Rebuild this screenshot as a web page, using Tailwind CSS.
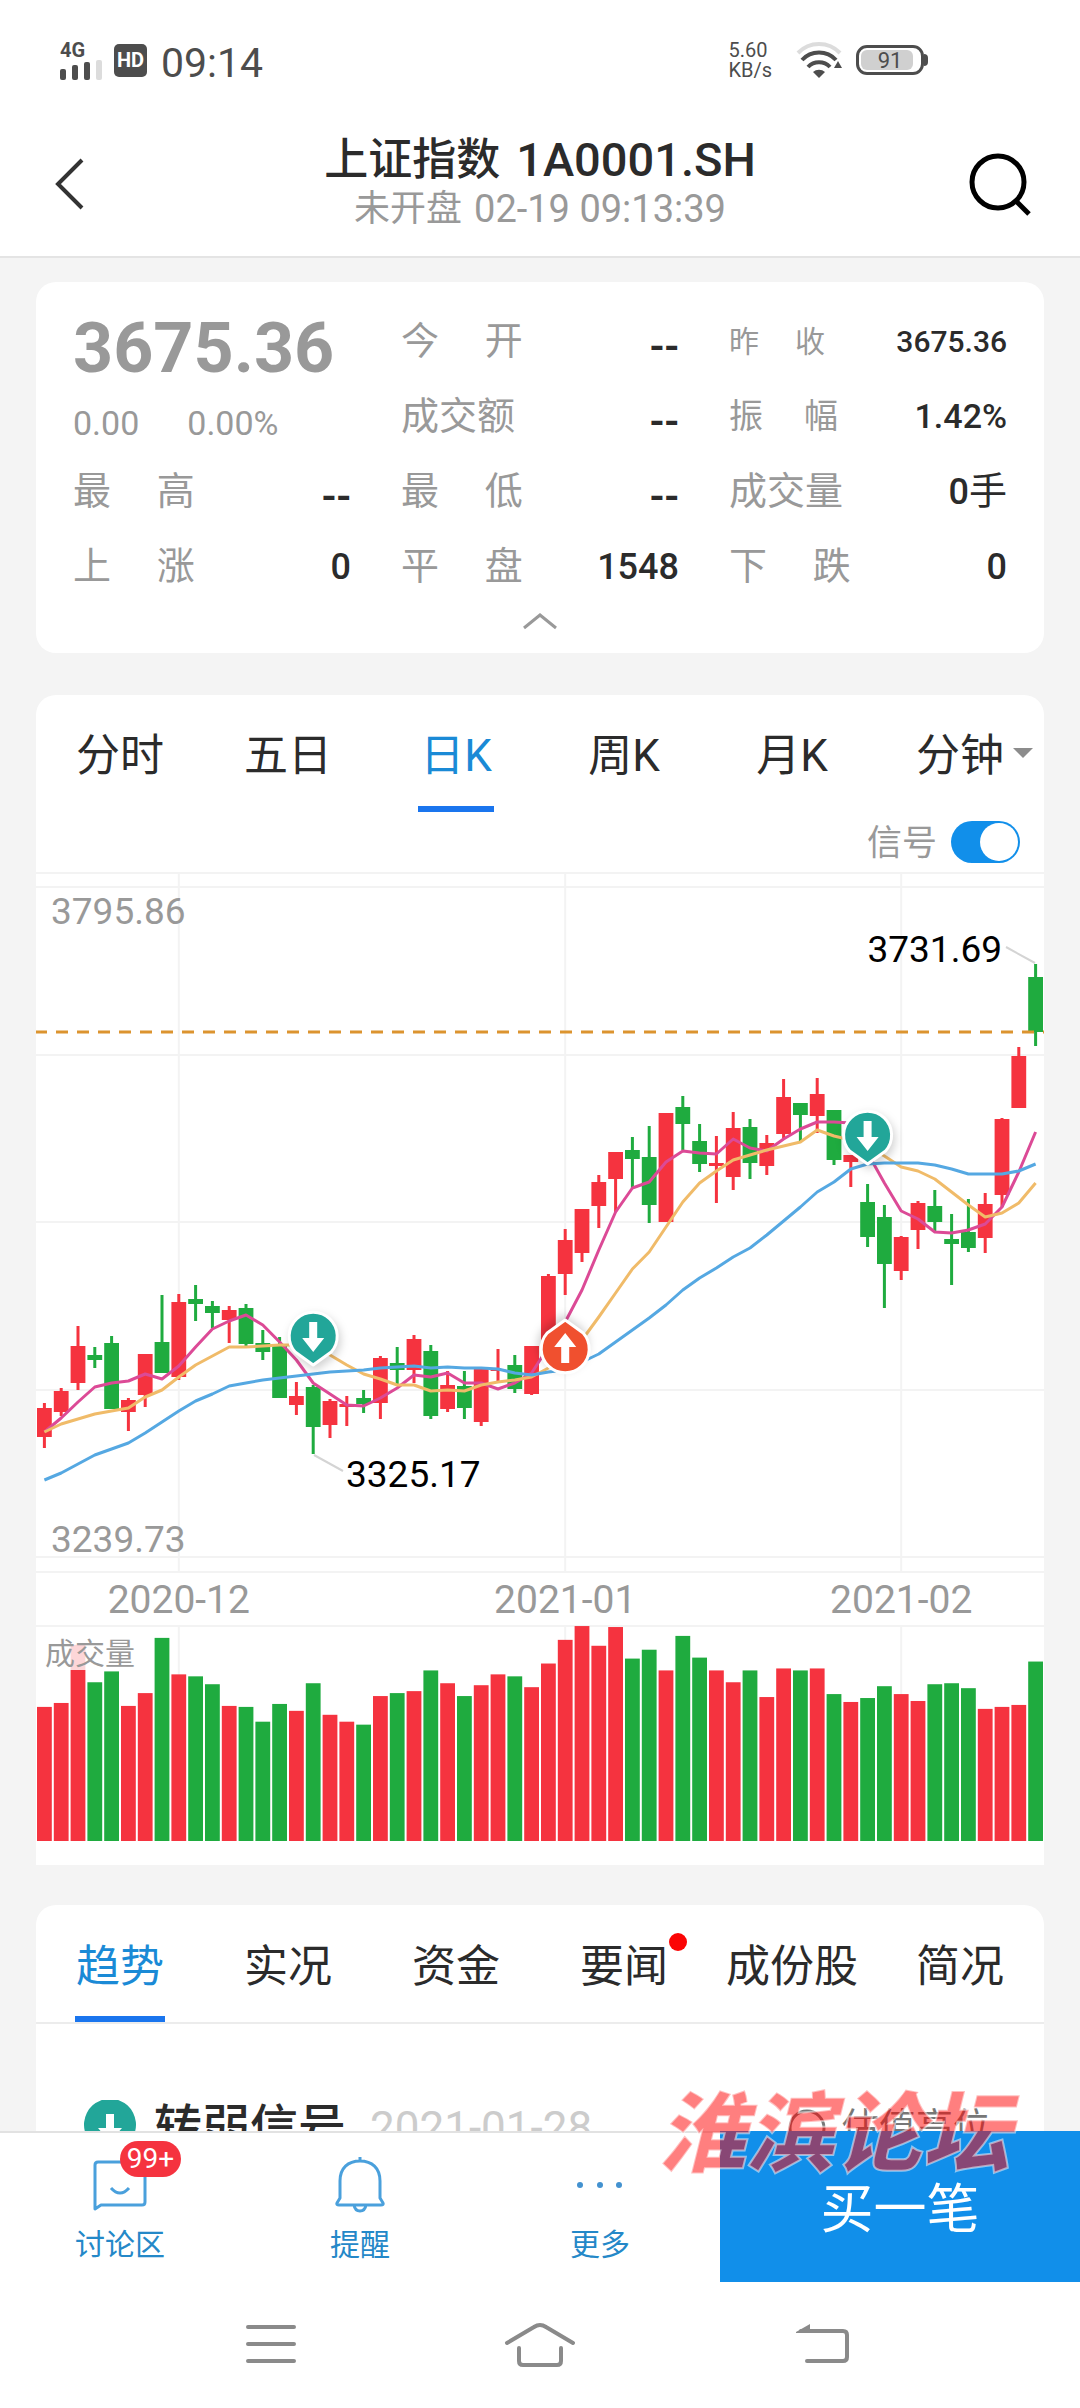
<!DOCTYPE html>
<html lang="zh-CN">
<head>
<meta charset="utf-8">
<meta name="viewport" content="width=device-width, initial-scale=1">
<title>上证指数 1A0001.SH</title>
<script src="https://cdn.jsdelivr.net/npm/@tailwindcss/browser@4"></script>
</head>
<body class="flex h-screen flex-col overflow-hidden bg-[#f4f4f4] font-[Roboto,'Noto_Sans_CJK_SC',sans-serif] text-[#2b2b2b]">

<!-- Status bar -->
<div class="flex h-[120px] shrink-0 items-center bg-white pl-[60px] pr-[152px] text-[#4d4d4d]">
  <div class="flex w-[44px] flex-col">
    <span class="text-[20px] leading-5 font-bold">4G</span>
    <svg class="h-[20px] w-[44px]" viewBox="0 0 44 20" aria-hidden="true">
      <g fill="#4d4d4d"><rect x="0" y="9" width="6" height="11" rx="2"/><rect x="12" y="5" width="6" height="15" rx="2"/><rect x="24" y="2" width="6" height="18" rx="2"/></g>
      <rect x="36" y="0" width="6" height="20" rx="2" fill="#dcdcdc"/>
    </svg>
  </div>
  <span class="ml-2.5 flex h-[33px] w-[33px] items-center justify-center rounded-[5px] bg-[#4d4d4d] text-[20px] font-bold text-white">HD</span>
  <span class="ml-3.5 pt-1.5 text-[41px] leading-[48px]">09:14</span>
  <div class="ml-auto flex flex-col text-[20px] leading-5">
    <span>5.60</span><span>KB/s</span>
  </div>
  <svg class="ml-6 h-[36px] w-[46px]" viewBox="0 0 46 36" fill="none" stroke-width="4" aria-hidden="true">
    <path d="M2 11a29 29 0 0 1 42 0" stroke="#dcdcdc"/>
    <path d="M6 18a23 23 0 0 1 34 0" stroke="#4d4d4d"/>
    <path d="M12 25a15 15 0 0 1 22 0" stroke="#4d4d4d"/>
    <path d="M17 30a9 9 0 0 1 12 0l-6 6z" fill="#4d4d4d"/>
    <path d="M38 26l4-7 4 7z" fill="#4d4d4d"/>
  </svg>
  <div class="ml-3.5 flex items-center">
    <span class="flex h-[30px] w-[68px] items-center rounded-[11px] border-[3px] border-[#4d4d4d] p-[2px]">
      <span class="flex h-full w-[52px] items-center justify-center rounded-[6px] bg-[#d0d0d0] pl-1.5 text-[22px]">91</span>
    </span>
    <span class="h-3 w-1 rounded-r bg-[#4d4d4d]"></span>
  </div>
</div>

<!-- Title bar -->
<header class="flex h-[138px] shrink-0 items-center border-b-2 border-[#e4e4e4] bg-white px-[49px] pb-2">
  <button type="button" aria-label="返回" class="flex h-16 w-16 items-center">
    <svg class="h-[54px] w-[36px]" viewBox="0 0 36 54" fill="none" stroke="#333" stroke-width="4"><path d="M33 3L9 27l24 24"/></svg>
  </button>
  <div class="flex flex-1 flex-col items-center">
    <h1 class="flex items-center gap-4 text-[44px] leading-[50px] font-medium"><span>上证指数</span><span class="text-[47px]">1A0001.SH</span></h1>
    <p class="flex items-center gap-3 text-[36px] leading-[48px] text-[#999]"><span>未开盘</span><span class="text-[38px]">02-19 09:13:39</span></p>
  </div>
  <button type="button" aria-label="搜索" class="flex h-16 w-16 items-center justify-end">
    <svg class="h-[64px] w-[64px]" viewBox="0 0 64 64" fill="none" stroke="#000" stroke-width="5"><circle cx="31" cy="30" r="26"/><path d="M49 49l13 13"/></svg>
  </button>
</header>

<main class="flex min-h-0 flex-1 flex-col overflow-hidden px-9">

  <!-- Quote summary -->
  <section class="mt-6 shrink-0 rounded-[20px] bg-white px-[37px] pt-[22px]">
    <div class="grid grid-cols-3 grid-rows-[repeat(4,75px)] gap-x-[50px] text-[36px]">
      <div class="row-span-2 flex flex-col text-[#999]">
        <strong class="text-[70px] leading-[88px] font-bold">3675.36</strong>
        <p class="flex gap-12 text-[34px] leading-[62px]"><span>0.00</span><span>0.00%</span></p>
      </div>
      <div class="flex items-center justify-between"><span class="text-[38px] text-[#999]">今　&thinsp;开</span><b class="font-['Noto_Sans_CJK_SC',sans-serif] text-[40px] font-bold">--</b></div>
      <div class="flex items-center justify-between"><span class="text-[30px] text-[#999]">昨　&thinsp;收</span><b class="text-[30px] font-medium">3675.36</b></div>
      <div class="flex items-center justify-between"><span class="text-[38px] text-[#999]">成交额</span><b class="font-['Noto_Sans_CJK_SC',sans-serif] text-[40px] font-bold">--</b></div>
      <div class="flex items-center justify-between"><span class="text-[34px] text-[#999]">振　&thinsp;幅</span><b class="text-[34px] font-medium">1.42%</b></div>
      <div class="flex items-center justify-between"><span class="text-[38px] text-[#999]">最　&thinsp;高</span><b class="font-['Noto_Sans_CJK_SC',sans-serif] text-[40px] font-bold">--</b></div>
      <div class="flex items-center justify-between"><span class="text-[38px] text-[#999]">最　&thinsp;低</span><b class="font-['Noto_Sans_CJK_SC',sans-serif] text-[40px] font-bold">--</b></div>
      <div class="flex items-center justify-between"><span class="text-[38px] text-[#999]">成交量</span><b class="font-medium">0<span class="text-[38px] font-normal">手</span></b></div>
      <div class="flex items-center justify-between"><span class="text-[38px] text-[#999]">上　&thinsp;涨</span><b class="font-medium">0</b></div>
      <div class="flex items-center justify-between"><span class="text-[38px] text-[#999]">平　&thinsp;盘</span><b class="font-medium">1548</b></div>
      <div class="flex items-center justify-between"><span class="text-[38px] text-[#999]">下　&thinsp;跌</span><b class="font-medium">0</b></div>
    </div>
    <button type="button" aria-label="收起" class="flex h-[49px] w-full justify-center pt-2">
      <svg class="h-[18px] w-[36px]" viewBox="0 0 36 18" fill="none" stroke="#999" stroke-width="3"><path d="M2 16L18 3l16 13"/></svg>
    </button>
  </section>

  <!-- K-line chart -->
  <section class="mt-[42px] shrink-0 rounded-t-[20px] bg-white">
    <nav class="grid h-[117px] grid-cols-6 text-[44px]">
      <button type="button" class="flex flex-col items-center"><span class="flex h-[111px] items-center pt-2.5">分时</span></button>
      <button type="button" class="flex flex-col items-center"><span class="flex h-[111px] items-center pt-2.5">五日</span></button>
      <button type="button" class="flex flex-col items-center text-[#1a8ad6]"><span class="flex h-[111px] items-center pt-2.5">日K</span><span class="h-1.5 w-[76px] bg-[#1a75ee]"></span></button>
      <button type="button" class="flex flex-col items-center"><span class="flex h-[111px] items-center pt-2.5">周K</span></button>
      <button type="button" class="flex flex-col items-center"><span class="flex h-[111px] items-center pt-2.5">月K</span></button>
      <button type="button" class="relative flex flex-col items-center"><span class="flex h-[111px] items-center pt-2.5">分钟</span>
        <svg class="absolute right-[11px] top-[53px] h-[10px] w-[20px]" viewBox="0 0 20 10" fill="#8c8c8c"><path d="M0 0h20L10 10z"/></svg>
      </button>
    </nav>
    <div class="flex h-[60px] items-center justify-end gap-3.5 pr-6">
      <label for="signal" class="pt-1 text-[35px] text-[#999]">信号</label>
      <span class="relative flex">
        <input id="signal" type="checkbox" role="switch" checked class="h-[42px] w-[69px] appearance-none rounded-full bg-[#ccc] checked:bg-[#118fea]">
        <span class="pointer-events-none absolute right-0.5 top-0.5 h-[38px] w-[38px] rounded-full bg-white"></span>
      </span>
    </div>
    <svg id="chart" class="block h-auto w-full font-[Roboto,'Noto_Sans_CJK_SC',sans-serif]" viewBox="0 0 1008 993" role="img" aria-label="日K线图"></svg>
  </section>

  <!-- Detail tabs -->
  <section class="mt-10 shrink-0 rounded-t-[20px] bg-white">
    <nav class="grid h-[119px] grid-cols-6 border-b-2 border-[#ececec] text-[44px] whitespace-nowrap">
      <button type="button" class="flex flex-col items-center text-[#1a8ad6]"><span class="flex h-[111px] items-center pt-3">趋势</span><span class="h-1.5 w-[90px] bg-[#1a75ee]"></span></button>
      <button type="button" class="flex flex-col items-center"><span class="flex h-[111px] items-center pt-3">实况</span></button>
      <button type="button" class="flex flex-col items-center"><span class="flex h-[111px] items-center pt-3">资金</span></button>
      <button type="button" class="relative flex flex-col items-center"><span class="flex h-[111px] items-center pt-3">要闻</span><span class="absolute right-[21px] top-7 h-[18px] w-[18px] rounded-full bg-[#fb0505]"></span></button>
      <button type="button" class="flex flex-col items-center"><span class="flex h-[111px] items-center pt-3">成份股</span></button>
      <button type="button" class="flex flex-col items-center"><span class="flex h-[111px] items-center pt-3">简况</span></button>
    </nav>
    <div class="flex items-center pt-[66px] pr-[54px] pl-12">
      <svg class="h-[56px] w-[52px]" viewBox="0 0 52 56"><path d="M26 56L5 40A26 26 0 1 1 47 40z" fill="#22a699"/><path d="M22 14h8v14h8L26 42 14 28h8z" fill="#fff"/></svg>
      <h2 class="ml-[18px] text-[48px] leading-[76px] font-medium">转弱信号</h2>
      <time class="ml-6 text-[44px] text-[#ccc]" datetime="2021-01-28">2021-01-28</time>
      <a href="#" class="ml-auto flex items-center gap-4 text-[37px] text-[#777]">
        <svg class="h-[38px] w-[38px]" viewBox="0 0 38 38" fill="none" stroke="#777" stroke-width="3"><circle cx="19" cy="19" r="17"/></svg>估值高位
      </a>
    </div>
  </section>
</main>

<!-- Action bar -->
<footer class="relative shrink-0 bg-white">
  <div class="grid h-[151px] grid-cols-[2fr_2fr_2fr_3fr] text-[30px] text-[#2488c8]">
    <button type="button" class="relative flex flex-col items-center border-t-2 border-[#e2e2e2] pt-6">
      <svg class="h-[56px] w-[56px]" viewBox="0 0 56 56" fill="none" stroke="#4aa0dc" stroke-width="3" stroke-linejoin="round"><path d="M3 52V8q0-3 3-3h44q3 0 3 3v37q0 3-3 3H9zM19 31q9 10 18 0"/></svg>
      <span class="mt-2 leading-[48px]">讨论区</span>
      <span class="absolute left-1/2 top-2 flex h-9 w-[61px] items-center justify-center rounded-full bg-[#f5333f] text-[28px] text-white">99+</span>
    </button>
    <button type="button" class="flex flex-col items-center border-t-2 border-[#e2e2e2] pt-6">
      <svg class="h-[56px] w-[56px]" viewBox="0 0 56 56" fill="none" stroke="#4aa0dc" stroke-width="3" stroke-linejoin="round"><path d="M28 0v4M8 41V24C8 11 16 4 28 4s20 7 20 20v17l3 5q1 2-2 2H7q-3 0-2-2zM22 48q1 6 6 6t6-6"/></svg>
      <span class="mt-2 leading-[48px]">提醒</span>
    </button>
    <button type="button" class="flex flex-col items-center border-t-2 border-[#e2e2e2] pt-6">
      <svg class="h-[56px] w-[56px]" viewBox="0 0 56 56" fill="#4392d0"><circle cx="8" cy="28" r="3"/><circle cx="28" cy="28" r="3"/><circle cx="47" cy="28" r="3"/></svg>
      <span class="mt-2 leading-[48px]">更多</span>
    </button>
    <button type="button" class="bg-[#118fea] pt-2 text-[53px] text-white">买一笔</button>
  </div>
  <div class="pointer-events-none absolute right-[70px] -top-[52px] flex font-['Noto_Sans_CJK_SC',sans-serif] text-[88px] leading-[96px] font-black text-[#ff0000]/50 italic [-webkit-text-stroke:2px_rgb(255_255_255_/_0.5)]">淮滨论坛</div>
  <div class="grid h-[126px] grid-cols-[1fr_270px_1fr] items-center">
    <button type="button" aria-label="最近任务" class="flex justify-end pr-[108px]"><svg class="h-[44px] w-[52px]" viewBox="0 0 52 44" stroke="#8a8a8a" stroke-width="4" stroke-linecap="round"><path d="M3 4h46M3 21h46M3 38h46"/></svg></button>
    <button type="button" aria-label="主页" class="flex justify-center"><svg class="h-[46px] w-[72px]" viewBox="0 0 72 46" fill="none" stroke="#8a8a8a" stroke-width="4" stroke-linecap="round"><path d="M3 21L30 5q6-4 12 0l27 16M15 26v13q0 4 4 4h34q4 0 4-4V26"/></svg></button>
    <button type="button" aria-label="后退" class="flex pl-[120px]"><svg class="h-[44px] w-[56px]" viewBox="0 0 56 44" fill="none" stroke="#8a8a8a" stroke-width="4" stroke-linecap="round"><path d="M6 8h42q4 0 4 4v22q0 4-4 4H12"/><path d="M1 9L15 1v9H1z" fill="#8a8a8a" stroke="none"/></svg></button>
  </div>
</footer>

<script>
  const UP = '#f5333f', DOWN = '#1fab3f';
  const step = 16.8, first = 8.4, cx = i => first + step * i;
  const base = 969, volScale = 0.986;

  // [rising, high, body top, body bottom, low, volume]
  const days = [
    [1,531,536,565,576,136],[1,516,519,540,544,140],[1,454,474,511,518,199],[0,475,483,488,496,161],[0,464,471,537,537,172],
    [1,526,528,540,559,137],[1,482,482,523,535,150],[0,423,470,501,501,206],[1,422,430,505,508,169],[0,413,427,432,449,167],
    [0,429,434,441,456,159],[1,434,438,448,471,137],[0,432,436,472,474,136],[0,458,471,480,488,121],[0,465,474,526,526,139],
    [1,510,524,533,543,132],[0,513,515,555,582,160],[1,527,529,553,566,128],[1,524,532,535,554,121],[0,518,526,532,541,118],
    [1,484,486,531,547,147],[0,475,491,498,512,150],[1,463,467,498,511,152],[0,473,479,544,547,173],[1,499,513,537,540,160],
    [0,499,514,536,547,147],[1,497,497,550,554,158],[1,477,497,499,509,169],[0,483,493,517,521,167],[1,474,474,522,523,156],
    [1,402,404,475,475,180],[1,357,368,402,423,204],[1,337,337,381,390,218],[1,303,310,334,356,198],[1,280,280,307,340,217],
    [0,265,278,287,316,185],[0,254,285,333,351,194],[1,241,241,350,350,173],[0,224,235,252,278,208],[0,252,269,292,300,186],
    [1,264,291,294,331,173],[1,240,256,305,318,161],[0,247,255,291,307,173],[1,263,271,294,303,146],[1,207,225,262,266,175],
    [0,231,231,243,270,173],[1,206,222,244,261,175],[0,238,238,288,293,149],[1,283,283,290,315,141],[0,312,330,365,375,145],
    [0,333,345,392,436,157],[1,364,365,399,408,149],[1,329,331,358,377,142],[0,318,334,350,360,159],[0,342,367,372,413,160],
    [0,327,360,376,380,155],[1,321,332,366,381,134],[1,246,247,323,335,136],[1,175,184,236,236,138],[0,92,105,160,174,182]
  ];
  const averages = {
    '#dc4a96': [560,546,530,515,511,509,502,507,494,475,457,449,443,453,470,488,511,522,533,534,526,516,503,505,501,511,511,517,511,501,475,450,418,378,340,316,310,290,279,281,282,267,276,279,267,257,250,250,251,281,311,339,347,360,361,358,352,335,300,260],
    '#f0bb69': [560,552,547,542,539,536,525,518,505,493,484,475,475,474,473,473,475,483,493,502,507,513,513,519,518,519,513,510,508,505,496,485,468,445,421,397,380,355,330,311,299,288,283,278,274,270,258,264,268,275,284,295,299,307,320,333,345,341,331,311],
    '#55a8e2': [608,601,592,583,577,571,561,550,539,529,522,514,511,508,506,504,502,500,499,498,496,495,494,496,495,496,496,497,501,503,500,498,490,482,470,458,446,433,418,406,396,385,376,363,349,335,320,310,297,292,291,291,291,293,297,302,302,302,299,292]
  };

  let s = '<g stroke="#f3f3f3" stroke-width="2">';
  for (const y of [1, 15, 183, 350, 518, 685, 700, 754]) s += `<path d="M0 ${y}H1008"/>`;
  for (const i of [8, 31, 51]) s += `<path d="M${cx(i)} 0V700M${cx(i)} 754V${base}"/>`;
  s += '</g>';

  days.forEach(([up, hi, top, bot, lo, vol], i) => {
    const x = cx(i), c = up ? UP : DOWN, h = vol * volScale;
    s += `<rect x="${x - 1.5}" y="${hi}" width="3" height="${lo - hi}" fill="${c}"/>`;
    s += `<rect x="${x - 7.4}" y="${top}" width="14.8" height="${bot - top}" fill="${c}"/>`;
    s += `<rect x="${x - 7.4}" y="${base - h}" width="14.8" height="${h}" fill="${c}"/>`;
  });
  s += '<path d="M-1 160H1008" stroke="#dc942f" stroke-width="3" stroke-dasharray="12 9"/>';
  for (const [color, ys] of Object.entries(averages))
    s += `<polyline fill="none" stroke="${color}" stroke-width="3" stroke-linejoin="round" points="${ys.map((y, i) => cx(i) + ',' + y).join(' ')}"/>`;

  const pin = (x, y, color, turn) => `<g transform="translate(${x} ${y}) rotate(${turn})" style="filter:drop-shadow(2px 4px 4px rgb(0 0 0 / .18))"><path d="M0 29L-18 16A24 24 0 1 1 18 16z" fill="${color}" stroke="#fff" stroke-width="3" stroke-linejoin="round"/><path d="M-4-14H4V2H11L0 16L-11 2H-4z" fill="#fff"/></g>`;
  s += pin(cx(16), 464, '#22a699', 0) + pin(cx(31), 477, '#f0502f', 180) + pin(cx(49), 263, '#22a699', 0);

  s += '<path d="M278 583l29 16M970 75l29 16" stroke="#d4d4d4" stroke-width="2"/>';
  s += '<g font-size="37" fill="#999"><text x="15" y="52">3795.86</text><text x="15" y="680">3239.73</text></g>';
  s += '<g font-size="37" fill="#000"><text x="310" y="615">3325.17</text><text x="966" y="90" text-anchor="end">3731.69</text></g>';
  s += `<g font-size="39" fill="#999" text-anchor="middle"><text x="${cx(8)}" y="741">2020-12</text><text x="${cx(31)}" y="741">2021-01</text><text x="${cx(51)}" y="741">2021-02</text></g>`;
  s += '<rect x="2" y="756" width="98" height="42" fill="#fff" fill-opacity=".8"/><text x="9" y="792" font-size="30" fill="#999">成交量</text>';
  document.getElementById('chart').innerHTML = s;
</script>
</body>
</html>
